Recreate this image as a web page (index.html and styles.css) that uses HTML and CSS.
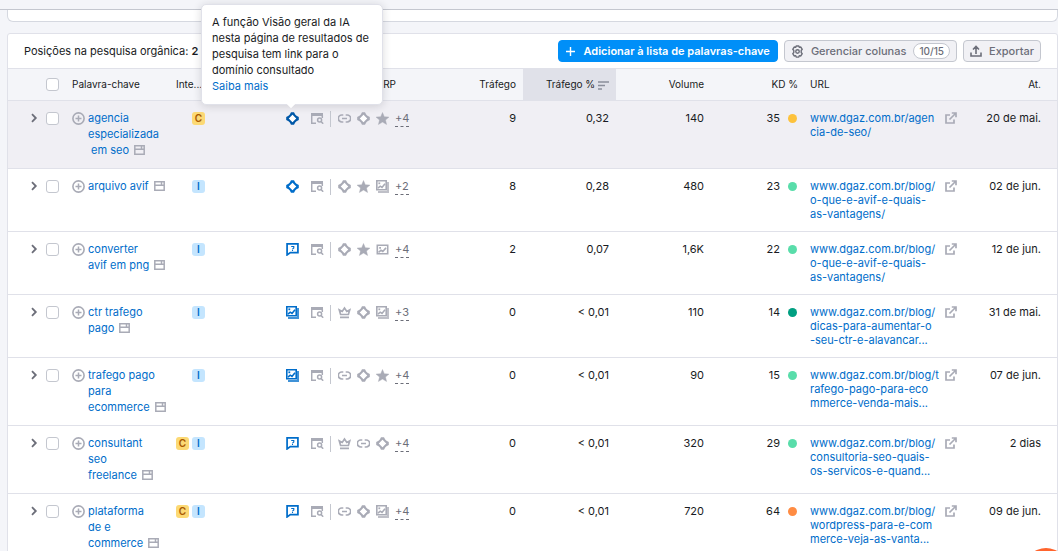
FILE: index.html
```html
<!DOCTYPE html>
<html lang="pt-BR">
<head>
<meta charset="utf-8">
<title>Posições na pesquisa orgânica</title>
<link rel="stylesheet" href="styles.css">
</head>
<body>
<svg class="sprite" aria-hidden="true">
  <symbol id="chevron" viewBox="0 0 8 10"><path d="M2 1.2 5.8 5 2 8.8" fill="none" stroke="currentColor" stroke-width="1.8"/></symbol>
  <symbol id="plus-circle" viewBox="0 0 13 13"><circle cx="6.5" cy="6.5" r="5.6" fill="none" stroke="currentColor" stroke-width="1.6"/><path d="M6.5 3.5v6M3.5 6.5h6" stroke="currentColor" stroke-width="1.5"/></symbol>
  <symbol id="page" viewBox="0 0 11 10"><path d="M.8.8h9.4v8.4H.8zM.8 4.2h9.4M7.5 1v2.5" fill="none" stroke="currentColor" stroke-width="1.5"/></symbol>
  <symbol id="ai" viewBox="0 0 13 13"><path fill-rule="evenodd" fill="currentColor" d="M5 .2h3l1.2 2.3 1.3 1.3L12.8 5v3l-2.3 1.2-1.3 1.3L8 12.8H5l-1.2-2.3-1.3-1.3L.2 8V5l2.3-1.2 1.3-1.3zM6.5 2.7 5.3 5.3 2.7 6.5 5.3 7.7 6.5 10.3 7.7 7.7 10.3 6.5 7.7 5.3zM4.3 6.5 6.5 8.7 8.7 6.5 6.5 4.3z" /><path d="M6.5 2.8 10.2 6.5 6.5 10.2 2.8 6.5z" class="hole"/></symbol>
  <symbol id="serp" viewBox="0 0 13 11"><path d="M0 0h12v3H0z" fill="currentColor"/><path d="M.7 2v8.3H5M11.3 2v3" fill="none" stroke="currentColor" stroke-width="1.5"/><circle cx="8.6" cy="7" r="2" fill="none" stroke="currentColor" stroke-width="1.5"/><path d="m10 8.5 2.2 2.2" stroke="currentColor" stroke-width="1.6"/></symbol>
  <symbol id="link" viewBox="0 0 13 9"><path d="M5.3 1H3.8a3.5 3.5 0 0 0 0 7h1.5M7.7 1h1.5a3.5 3.5 0 0 1 0 7H7.7M4 4.5h5" fill="none" stroke="currentColor" stroke-width="1.7"/></symbol>
  <symbol id="star" viewBox="0 0 13 12"><path d="m6.5 0 1.8 4.2 4.7.4-3.5 3 1.1 4.4-4.1-2.4L2.4 12l1.1-4.4L0 4.6l4.7-.4z" fill="currentColor" stroke="currentColor" stroke-width=".4"/></symbol>
  <symbol id="image" viewBox="0 0 13 12"><path d="M1.3 1.8h10.4v8.5H1.3z" fill="none" stroke="currentColor" stroke-width="1.6"/><path d="m2.5 8.8 2.5-2L6.8 8 10 4.4" fill="none" stroke="currentColor" stroke-width="1.6"/><path d="M3.2 3.4H5v1.8H3.2z" fill="currentColor"/></symbol>
  <symbol id="images" viewBox="0 0 13 13"><path d="M.8.8h9.4v8.9H.8z" fill="none" stroke="currentColor" stroke-width="1.6"/><path d="m2 8.2 2.2-2L6 7.4l3-3.6" fill="none" stroke="currentColor" stroke-width="1.6"/><path d="M2.4 2.4h1.8v1.8H2.4z" fill="currentColor"/><path d="M12 2v9.9H2" fill="none" stroke="currentColor" stroke-width="2" opacity=".75"/></symbol>
  <symbol id="crown" viewBox="0 0 13 12"><path d="M2.6 8 1.3 3.5 4.2 5 6.5 1.5 8.8 5l2.9-1.5L10.4 8zM2 10.8h9" fill="none" stroke="currentColor" stroke-width="1.7"/></symbol>
  <symbol id="faq" viewBox="0 0 12 12"><path d="M1 .9h10v7.9H4L1 11z" fill="none" stroke="currentColor" stroke-width="1.6"/><path d="M4.8 3.2h2.4v1.4L6 5.5M6 6.2v1.2" fill="none" stroke="currentColor" stroke-width="1"/></symbol>
  <symbol id="external" viewBox="0 0 12 12"><path d="M5 3H1v8h8V7.5M4.5 7.5 10.5 1.5M6.8 1H11v4.2" fill="none" stroke="currentColor" stroke-width="1.7"/></symbol>
  <symbol id="gear" viewBox="0 0 14 14"><path d="m5.6 1-.5 1.6-1.7-.4L1.9 4.6l1.1 1.3v2.2L1.9 9.4l1.5 2.4 1.7-.4.5 1.6h2.8l.5-1.6 1.7.4 1.5-2.4L11 8.1V5.9l1.1-1.3-1.5-2.4-1.7.4L8.4 1z" fill="none" stroke="currentColor" stroke-width="1.5" stroke-linejoin="round"/><circle cx="7" cy="7" r="1.9" fill="none" stroke="currentColor" stroke-width="1.5"/></symbol>
  <symbol id="export" viewBox="0 0 12 12"><path d="M6 9V2M3 4.5l3-3 3 3M1 7.5V11h10V7.5" fill="none" stroke="currentColor" stroke-width="1.6"/></symbol>
</svg>

<div class="topbar"></div>
<div class="card-end"></div>
<main class="panel">
  <header class="toolbar">
    <h1 class="title">Posições na pesquisa orgânica: <b>2</b></h1>
    <div class="actions">
      <button class="btn primary"><svg width="9" height="9" viewBox="0 0 9 9"><path d="M4.5 0v9M0 4.5h9" stroke="currentColor" stroke-width="1.4"/></svg>Adicionar à lista de palavras-chave</button>
      <button class="btn"><svg width="13" height="13"><use href="#gear"/></svg>Gerenciar colunas <span class="count">10/15</span></button>
      <button class="btn"><svg width="12" height="12"><use href="#export"/></svg>Exportar</button>
    </div>
  </header>
  <table class="grid">
    <colgroup><col class="c-exp"><col class="c-check"><col class="c-key"><col class="c-int"><col class="c-serp"><col class="c-traf"><col class="c-pct"><col class="c-vol"><col class="c-kd"><col class="c-url"><col class="c-date"></colgroup>
    <thead><tr>
      <th></th><th><input type="checkbox" class="check" aria-label="Selecionar tudo"></th><th>Palavra-chave</th><th>Inte...</th><th class="serp-head">SERP</th><th class="num">Tráfego</th>
      <th class="num sorted">Tráfego % <svg width="11" height="9" viewBox="0 0 11 9"><path d="M0 1h11M0 4.5h7M0 8h4" stroke="currentColor" stroke-width="1.4"/></svg></th>
      <th class="num">Volume</th><th class="num kd-head">KD %</th><th>URL</th><th class="num">At.</th>
    </tr></thead>
    <tbody id="rows"></tbody>
  </table>
</main>
<div class="tooltip" role="tooltip">A função Visão geral da IA<br>nesta página de resultados de<br>pesquisa tem link para o<br>domínio consultado<br><a href="#">Saiba mais</a></div>
<button class="chat" aria-label="Ajuda"></button>
<script src="rows.js"></script>
</body>
</html>
```

FILE: styles.css
```css
* { box-sizing: border-box; }
body {
  margin: 0;
  height: 100vh;
  overflow: hidden;
  position: relative;
  background: #f4f5f9;
  color: #191b23;
  font: 11px/16px Inter, "Liberation Sans", sans-serif;
}
a { color: #006dca; text-decoration: none; }
svg { display: block; flex: none; }
.sprite { position: absolute; width: 0; height: 0; }
.hole { fill: #fff; }
.topbar { height: 10px; border-bottom: 1px solid #c4c7cf; }
.card-end {
  height: 12px;
  margin: 0 0 11px 7px;
  background: #fff;
  border: 1px solid #d5d8e0;
  border-top: 0;
  border-radius: 0 0 6px 6px;
}
.panel {
  margin-left: 7px;
  background: #fff;
  border: 1px solid #e0e1e9;
  border-radius: 3px 3px 0 0;
}
.toolbar {
  display: flex;
  align-items: center;
  justify-content: space-between;
  height: 34px;
  padding: 0 16px;
}
.title { margin: 0; font-size: 11px; line-height: 16px; font-weight: 400; }
.title b { font-weight: 600; }
.actions { display: flex; gap: 6px; }
.btn {
  display: flex;
  align-items: center;
  gap: 7px;
  height: 22px;
  padding: 0 6px;
  border: 1px solid #c4c7cf;
  border-radius: 4px;
  background: #f1f1f5;
  color: #6c6e79;
  font: 500 11px/16px Inter, sans-serif;
  white-space: nowrap;
}
.btn.primary {
  gap: 9px;
  padding: 0 7px;
  border-color: #008ff8;
  background: #008ff8;
  color: #fff;
  font-weight: 600;
}
.count {
  padding: 0 5px;
  border: 1px solid #c4c7cf;
  border-radius: 8px;
  background: #fff;
  font-size: 10px;
  line-height: 14px;
}
.grid { width: 100%; table-layout: fixed; border-collapse: separate; border-spacing: 0; }
.c-exp { width: 38px; }
.c-check { width: 26px; }
.c-key { width: 99px; }
.c-int { width: 115px; }
.c-serp { width: 140px; }
.c-traf { width: 97px; }
.c-pct { width: 93px; }
.c-vol { width: 95px; }
.c-kd { width: 99px; }
.c-date { width: 90px; }
th {
  height: 33px;
  padding: 0 0 2px;
  border: solid #e0e1e9;
  border-width: 1px 0;
  background: #f4f5f9;
  font-size: 10px;
  line-height: 14px;
  font-weight: 400;
  text-align: left;
  white-space: nowrap;
}
th:nth-child(4) { padding-left: 5px; }
.serp-head { padding-right: 30px; text-align: right; }
th.num, td.num { padding-right: 7px; text-align: right; }
th.sorted { background: #e0e1e9; }
.sorted svg { display: inline-block; color: #8a8e9b; vertical-align: -2px; }
th.kd-head { padding-right: 12px; }
th:last-child, td.num:last-child { padding-right: 16px; }
td {
  padding: 9px 0 10px;
  border-bottom: 1px solid #e0e1e9;
  vertical-align: top;
  white-space: nowrap;
}
.active td { background: #f0eff4; }
.check {
  display: block;
  appearance: none;
  width: 13px;
  height: 13px;
  margin: 0;
  border: 1px solid #c4c7cf;
  border-radius: 3px;
  background: #fff;
}
th .check { margin-top: 2px; }
td .check { margin-top: 2px; }
.expand {
  display: block;
  margin: 3px 0 0 22px;
  padding: 0;
  border: 0;
  background: none;
  color: #6c6e79;
}
.keyword { display: flex; gap: 3px; }
.add { display: block; height: 13px; margin-top: 2px; padding: 0; border: 0; background: none; color: #a9abb6; }
.keyword a svg { display: inline-block; margin-left: 2px; color: #a9abb6; vertical-align: -1px; }
.intents { display: flex; justify-content: flex-end; gap: 3px; width: 34px; padding-top: 2px; }
.tag { width: 13px; border-radius: 3px; font-size: 10px; line-height: 13px; font-weight: 600; text-align: center; }
.tag.C { background: #fcd974; color: #a75800; }
.tag.I { background: #c4e5fe; color: #006dca; }
.features { display: flex; align-items: center; gap: 6px; height: 17px; color: #a9abb6; }
.feature-main { margin-right: 6px; color: #006dca; }
.active .feature-main { color: #0058a8; }
.split { width: 1px; height: 16px; margin-right: 1px; background: #c4c7cf; }
.more { height: 16px; border-bottom: 1px dashed #6c6e79; color: #6c6e79; line-height: 15px; }
.kd { display: flex; align-items: center; justify-content: flex-end; gap: 8px; padding-right: 13px; }
.dot { width: 9px; height: 9px; border-radius: 50%; }
.easy { background: #59ddaa; }
.simple { background: #009f81; }
.medium { background: #fdc23c; }
.hard { background: #ff8c43; }
.url { display: flex; align-items: flex-start; justify-content: space-between; width: 147px; padding-top: 1px; line-height: 14px; }
.url svg { margin-top: 1px; color: #a9abb6; }
.tooltip {
  position: absolute;
  left: 201px;
  top: 4px;
  width: 182px;
  padding: 9px 10px 10px;
  border: 1px solid #e0e1e9;
  border-radius: 5px;
  background: #fff;
  box-shadow: 0 1px 8px rgba(25, 27, 35, .16);
  white-space: nowrap;
}
.tooltip::after {
  content: "";
  position: absolute;
  left: 86px;
  bottom: -3px;
  width: 6px;
  height: 6px;
  background: #fff;
  transform: rotate(45deg);
}
.chat {
  position: absolute;
  right: -10px;
  bottom: -41px;
  width: 44px;
  height: 44px;
  border: 0;
  border-radius: 50%;
  background: #ff642d;
}
```

FILE: rows.js
```js
const rows = [
  ["agencia<br>especializada<br>&nbsp;em seo", "C", "ai", "link ai star", 4, "9", "0,32", "140", 35, "medium", "www.dgaz.com.br/agen<br>cia-de-seo/", "20 de mai."],
  ["arquivo avif", "I", "ai", "ai star images", 2, "8", "0,28", "480", 23, "easy", "www.dgaz.com.br/blog/<br>o-que-e-avif-e-quais-<br>as-vantagens/", "02 de jun."],
  ["converter<br>avif em png", "I", "faq", "ai star image", 4, "2", "0,07", "1,6K", 22, "easy", "www.dgaz.com.br/blog/<br>o-que-e-avif-e-quais-<br>as-vantagens/", "12 de jun."],
  ["ctr trafego<br>pago", "I", "images", "crown ai images", 3, "0", "&lt; 0,01", "110", 14, "simple", "www.dgaz.com.br/blog/<br>dicas-para-aumentar-o<br>-seu-ctr-e-alavancar...", "31 de mai."],
  ["trafego pago<br>para<br>ecommerce", "I", "images", "link ai star", 4, "0", "&lt; 0,01", "90", 15, "easy", "www.dgaz.com.br/blog/t<br>rafego-pago-para-eco<br>mmerce-venda-mais...", "07 de jun."],
  ["consultant<br>seo<br>freelance", "CI", "faq", "crown link ai", 4, "0", "&lt; 0,01", "320", 29, "easy", "www.dgaz.com.br/blog/<br>consultoria-seo-quais-<br>os-servicos-e-quand...", "2 dias"],
  ["plataforma<br>de e<br>commerce", "CI", "faq", "link ai images", 4, "0", "&lt; 0,01", "720", 64, "hard", "www.dgaz.com.br/blog/<br>wordpress-para-e-com<br>merce-veja-as-vanta...", "09 de jun."]
];

const icon = (id, w = 13, h = 13, cls = "") =>
  `<svg class="${cls}" width="${w}" height="${h}"><use href="#${id}"/></svg>`;

document.getElementById("rows").innerHTML = rows.map(
  ([key, intents, main, features, more, traffic, share, volume, kd, level, url, date], i) => `
  <tr class="${i === 0 ? "active" : ""}">
    <td><button class="expand" aria-label="Expandir">${icon("chevron", 8, 10)}</button></td>
    <td><input type="checkbox" class="check" aria-label="Selecionar"></td>
    <td><div class="keyword"><button class="add" aria-label="Adicionar">${icon("plus-circle")}</button><a href="#">${key} ${icon("page", 11, 10)}</a></div></td>
    <td><div class="intents">${[...intents].map(t => `<span class="tag ${t}">${t}</span>`).join("")}</div></td>
    <td><div class="features">${icon(main, 13, 13, "feature-main")}${icon("serp", 13, 11)}<span class="split"></span>${features.split(" ").map(f => icon(f)).join("")}<span class="more">+${more}</span></div></td>
    <td class="num">${traffic}</td><td class="num">${share}</td><td class="num">${volume}</td>
    <td><div class="kd">${kd}<span class="dot ${level}"></span></div></td>
    <td><div class="url"><a href="#">${url}</a>${icon("external", 12, 12)}</div></td>
    <td class="num">${date}</td>
  </tr>`).join("");
```
